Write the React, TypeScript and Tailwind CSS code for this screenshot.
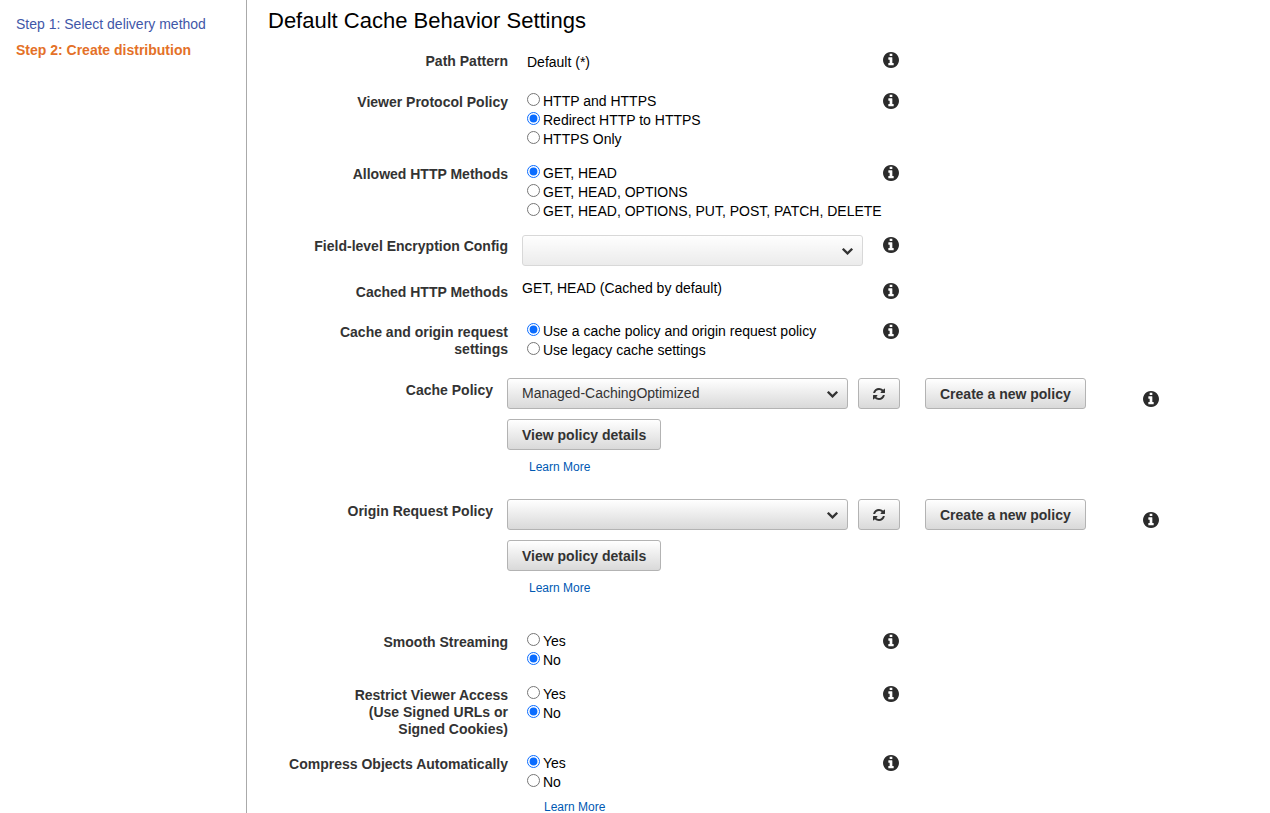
import { useId, useState } from "react";
import type { ReactNode } from "react";

function InfoIcon() {
  return (
    <svg viewBox="128 128 1536 1536" className="size-4 fill-[#2b2b2b]" aria-hidden="true">
      <path d="M1152 1376v-160q0-14-9-23t-23-9h-96v-512q0-14-9-23t-23-9h-320q-14 0-23 9t-9 23v160q0 14 9 23t23 9h96v320h-96q-14 0-23 9t-9 23v160q0 14 9 23t23 9h448q14 0 23-9t9-23zM1024 480v-160q0-14-9-23t-23-9h-192q-14 0-23 9t-9 23v160q0 14 9 23t23 9h192q14 0 23-9t9-23zM1664 896q0 209-103 385.5t-279.5 279.5-385.5 103-385.5-103-279.5-279.5-103-385.5 103-385.5 279.5-279.5 385.5-103 385.5 103 279.5 279.5 103 385.5z" />
    </svg>
  );
}

function InfoButton() {
  return (
    <button type="button" aria-label="More information" className="block size-4 shrink-0 cursor-pointer">
      <InfoIcon />
    </button>
  );
}

function RefreshIcon() {
  return (
    <svg viewBox="128 128 1536 1536" className="size-3 fill-[#333]" aria-hidden="true">
      <path d="M1639 1056q0 5-1 7-64 268-268 434.5t-478 166.5q-146 0-282.5-55t-243.5-157l-129 129q-19 19-45 19t-45-19-19-45v-448q0-26 19-45t45-19h448q26 0 45 19t19 45-19 45l-137 137q71 66 161 102t187 36q134 0 250-65t186-179q11-17 53-117 8-23 30-23h192q13 0 22.5 9.5t9.5 22.5zm25-800v448q0 26-19 45t-45 19h-448q-26 0-45-19t-19-45 19-45l138-138q-148-137-349-137-134 0-250 65t-186 179q-11 17-53 117-8 23-30 23h-199q-13 0-22.5-9.5t-9.5-22.5v-7q65-268 270-434.5t480-166.5q146 0 284 55.5t245 156.5l130-129q19-19 45-19t45 19 19 45z" />
    </svg>
  );
}

function ChevronIcon() {
  return (
    <svg viewBox="90 532 1612 1036" className="h-[7px] w-[11px] fill-[#333]" aria-hidden="true">
      <path d="M1683 808l-742 741q-19 19-45 19t-45-19l-742-741q-19-19-19-45.5t19-45.5l166-165q19-19 45-19t45 19l531 531 531-531q19-19 45-19t45 19l166 165q19 19 19 45.5t-19 45.5z" />
    </svg>
  );
}

function Button({ children, label }: { children: ReactNode; label?: string }) {
  return (
    <button
      type="button"
      aria-label={label}
      className="flex h-[31px] shrink-0 cursor-pointer items-center rounded-[3px] border border-[#b3b3b3] bg-linear-to-b from-white to-[#d9d9d9] px-3.5 pt-px text-sm font-bold text-[#333]"
    >
      {children}
    </button>
  );
}

function Select({ id, options, disabled = false }: { id: string; options: string[]; disabled?: boolean }) {
  return (
    <div className="relative w-[341px] shrink-0">
      <select
        id={id}
        disabled={disabled}
        className="block h-[31px] w-full appearance-none rounded-[3px] border border-[#b3b3b3] bg-linear-to-b from-white to-[#d9d9d9] pr-8 pb-0.5 pl-3.5 text-sm text-[#333] disabled:opacity-50"
      >
        {options.map((option) => (
          <option key={option}>{option}</option>
        ))}
      </select>
      <span className="pointer-events-none absolute top-[13px] right-2.5">
        <ChevronIcon />
      </span>
    </div>
  );
}

function LearnMore() {
  return (
    <a href="#learn-more" className="block w-fit text-xs leading-[13px] text-[#0059b3]">
      Learn More
    </a>
  );
}

const labelText = "shrink-0 text-right text-sm leading-[17px] font-bold text-[#333]";

function Row({ label, htmlFor, children }: { label: ReactNode; htmlFor?: string; children: ReactNode }) {
  return (
    <div className="flex gap-3.5">
      {htmlFor ? (
        <label htmlFor={htmlFor} className={`w-[240px] pt-[3px] ${labelText}`}>
          {label}
        </label>
      ) : (
        <div className={`w-[240px] pt-[3px] ${labelText}`}>{label}</div>
      )}
      <div className="w-[347px] shrink-0">{children}</div>
      <div className="pt-0.5">
        <InfoButton />
      </div>
    </div>
  );
}

function RadioRow({
  label,
  options,
  initial,
  children,
}: {
  label: ReactNode;
  options: string[];
  initial: string;
  children?: ReactNode;
}) {
  const name = useId();
  const [value, setValue] = useState(initial);
  return (
    <fieldset aria-labelledby={`${name}-label`}>
      <Row label={<span id={`${name}-label`}>{label}</span>}>
        {options.map((option) => (
          <label key={option} className="flex h-[19px] items-start gap-[3px] pl-[5px] text-sm leading-5 whitespace-nowrap">
            <input
              type="radio"
              name={name}
              checked={value === option}
              onChange={() => setValue(option)}
              className="mt-0.5 size-[13px] shrink-0 accent-[#0a6cff]"
            />
            {option}
          </label>
        ))}
        {children}
      </Row>
    </fieldset>
  );
}

function PolicyRow({ label, options }: { label: string; options: string[] }) {
  const id = useId();
  return (
    <div className="flex gap-3.5">
      <label htmlFor={id} className={`w-[225px] pt-1 ${labelText}`}>
        {label}
      </label>
      <div className="flex flex-col items-start">
        <div className="flex">
          <Select id={id} options={options} />
          <div className="ml-2.5">
            <Button label={`Refresh ${label}`}>
              <RefreshIcon />
            </Button>
          </div>
          <div className="ml-[25px]">
            <Button>Create a new policy</Button>
          </div>
          <div className="ml-[57px] pt-[13px]">
            <InfoButton />
          </div>
        </div>
        <div className="mt-2.5">
          <Button>View policy details</Button>
        </div>
        <div className="mt-[11px] ml-[22px]">
          <LearnMore />
        </div>
      </div>
    </div>
  );
}

export default function App() {
  return (
    <div className="flex min-h-screen bg-white font-['Liberation_Sans',Arial,sans-serif] text-sm text-black">
      <nav aria-label="Steps" className="w-[246px] shrink-0 pt-[15px] pl-4">
        <ol className="flex flex-col gap-2 leading-[18px]">
          <li>
            <a href="#step-1" className="text-[#3f57a8]">
              Step 1: Select delivery method
            </a>
          </li>
          <li aria-current="step" className="font-bold text-[#e47128]">
            Step 2: Create distribution
          </li>
        </ol>
      </nav>
      <main className="min-w-0 flex-1 border-l border-[#aaa] pt-[9px] pl-[21px]">
        <h1 className="text-[22px] leading-6">Default Cache Behavior Settings</h1>
        <form className="mt-[17px]">
          <div className="flex flex-col gap-[15px]">
            <Row label="Path Pattern">
              <p className="h-[26px] pt-1 pl-[5px] leading-[17px]">Default (*)</p>
            </Row>
            <RadioRow
              label="Viewer Protocol Policy"
              options={["HTTP and HTTPS", "Redirect HTTP to HTTPS", "HTTPS Only"]}
              initial="Redirect HTTP to HTTPS"
            />
            <RadioRow
              label="Allowed HTTP Methods"
              options={["GET, HEAD", "GET, HEAD, OPTIONS", "GET, HEAD, OPTIONS, PUT, POST, PATCH, DELETE"]}
              initial="GET, HEAD"
            />
            <Row label="Field-level Encryption Config" htmlFor="encryption-config">
              <Select id="encryption-config" options={[""]} disabled />
            </Row>
            <Row label="Cached HTTP Methods">
              <p className="h-[25px] leading-[14px]">GET, HEAD (Cached by default)</p>
            </Row>
            <RadioRow
              label={
                <>
                  Cache and origin request
                  <br />
                  settings
                </>
              }
              options={["Use a cache policy and origin request policy", "Use legacy cache settings"]}
              initial="Use a cache policy and origin request policy"
            />
          </div>
          <div className="mt-[19px] flex flex-col gap-[25px]">
            <PolicyRow label="Cache Policy" options={["Managed-CachingOptimized"]} />
            <PolicyRow label="Origin Request Policy" options={[""]} />
          </div>
          <div className="mt-9 flex flex-col gap-[15px]">
            <RadioRow label="Smooth Streaming" options={["Yes", "No"]} initial="No" />
            <RadioRow
              label={
                <>
                  Restrict Viewer Access
                  <br />
                  (Use Signed URLs or
                  <br />
                  Signed Cookies)
                </>
              }
              options={["Yes", "No"]}
              initial="No"
            />
            <RadioRow label="Compress Objects Automatically" options={["Yes", "No"]} initial="Yes">
              <div className="pt-2.5 pl-[22px]">
                <LearnMore />
              </div>
            </RadioRow>
          </div>
        </form>
      </main>
    </div>
  );
}
